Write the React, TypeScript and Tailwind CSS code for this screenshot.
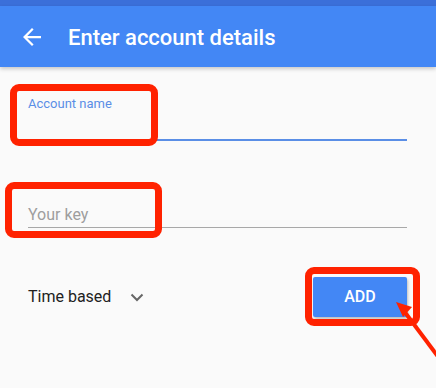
import React from 'react';

const RED = '#ff2200';

function BackArrow() {
  return (
    <svg width="18" height="18" viewBox="0 0 16 16" fill="none">
      <path d="M16 7H3.83l5.59-5.59L8 0 0 8l8 8 1.41-1.41L3.83 9H16z" fill="#fff" />
    </svg>
  );
}

function Chevron() {
  return (
    <svg width="14" height="9" viewBox="0 0 14 9" fill="none">
      <path d="M1.5 1.5 7 7l5.5-5.5" stroke="#666" strokeWidth="2" />
    </svg>
  );
}

export default function App() {
  return (
    <div
      className="relative w-[436px] h-[388px] overflow-hidden bg-[#fafafa]"
      style={{ fontFamily: 'Roboto, "Liberation Sans", sans-serif' }}
    >
      <div className="h-[6px] bg-[#3b6fd9]" />
      <div className="h-[61px] bg-[#4387f5] flex items-center pl-[23px] shadow-[0_2px_4px_rgba(0,0,0,0.2)] relative z-10">
        <BackArrow />
        <h1 className="ml-[27px] text-white text-[22px] font-medium leading-none pt-[2px]">
          Enter account details
        </h1>
      </div>

      <div className="pl-[28px] pr-[29px]">
        <div className="pt-[29px]">
          <p className="text-[13px] leading-[15px] text-[#5a8ee6]">Account name</p>
          <div className="h-[30px] border-b-2 border-[#5a8ee6]" />
        </div>

        <div className="mt-[62px]">
          <div className="h-[25px] flex items-end border-b-[1.5px] border-[#a8a8a8] pb-[4px]">
            <span className="text-[16px] leading-none text-[#9e9e9e]">Your key</span>
          </div>
        </div>

        <div className="mt-[49px] flex items-center justify-between">
          <div className="flex items-center">
            <span className="text-[16px] text-[#212121]">Time based</span>
            <span className="ml-[19px] flex"><Chevron /></span>
          </div>
          <button className="w-[94px] h-[40px] bg-[#4387f5] text-white text-[16px] font-medium rounded-[2px] shadow-[1px_2px_3px_rgba(0,0,0,0.25)]">
            ADD
          </button>
        </div>
      </div>

      {/* annotation overlays */}
      <div className="absolute left-[10px] top-[84px] w-[148px] h-[62px] border-[7px] border-[#ff2200] rounded-[9px]" />
      <div className="absolute left-[5px] top-[182px] w-[157px] h-[56px] border-[7px] border-[#ff2200] rounded-[9px]" />
      <div className="absolute left-[305px] top-[267px] w-[115px] h-[59px] border-[7px] border-[#ff2200] rounded-[9px]" />
      <svg className="absolute left-0 top-0" width="436" height="388" viewBox="0 0 436 388">
        <line x1="404" y1="311" x2="442" y2="362" stroke={RED} strokeWidth="4" />
        <polygon points="396,302 412,307 403,317" fill={RED} />
      </svg>
    </div>
  );
}
